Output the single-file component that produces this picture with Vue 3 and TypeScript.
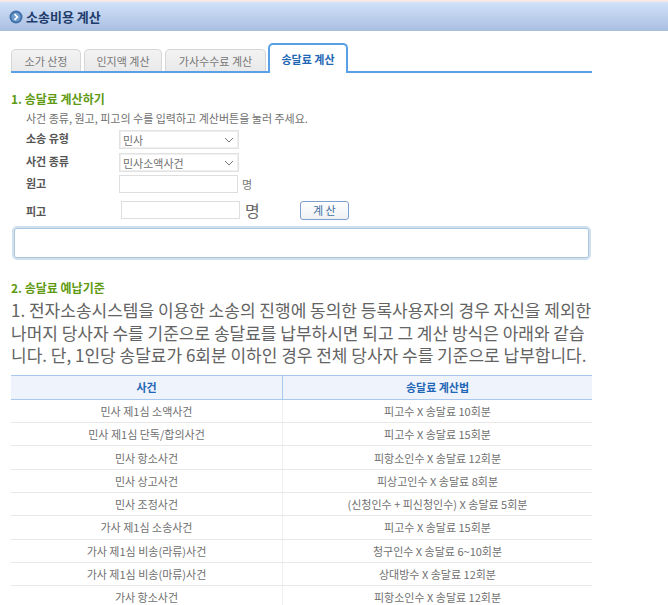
<script setup lang="ts">
const tabs = [
  { label: '소가 산정', w: 70 },
  { label: '인지액 계산', w: 78 },
  { label: '가사수수료 계산', w: 101 },
]
const rows: [string, string][] = [
  ['민사 제1심 소액사건', '피고수 X 송달료 10회분'],
  ['민사 제1심 단독/합의사건', '피고수 X 송달료 15회분'],
  ['민사 항소사건', '피항소인수 X 송달료 12회분'],
  ['민사 상고사건', '피상고인수 X 송달료 8회분'],
  ['민사 조정사건', '(신청인수 + 피신청인수) X 송달료 5회분'],
  ['가사 제1심 소송사건', '피고수 X 송달료 15회분'],
  ['가사 제1심 비송(라류)사건', '청구인수 X 송달료 6~10회분'],
  ['가사 제1심 비송(마류)사건', '상대방수 X 송달료 12회분'],
  ['가사 항소사건', '피항소인수 X 송달료 12회분'],
]
</script>

<template>
  <div class="page">
    <header class="title-bar">
      <svg class="bullet" width="14" height="14" viewBox="0 0 14 14">
        <circle cx="7" cy="7" r="6.5" fill="#3f6fa8" />
        <circle cx="7" cy="7" r="4.6" fill="#6f9ccc" />
        <path d="M5.6 4.2 8.4 7 5.6 9.8" fill="none" stroke="#fff" stroke-width="1.7" />
      </svg>
      <h1>소송비용 계산</h1>
    </header>

    <main class="content">
      <nav class="tabs">
        <a v-for="t in tabs" :key="t.label" class="tab" :style="{ width: t.w + 'px' }">{{ t.label }}</a>
        <a class="tab active">송달료 계산</a>
      </nav>

      <h2 class="heading first">1. 송달료 계산하기</h2>
      <p class="desc">사건 종류, 원고, 피고의 수를 입력하고 계산버튼을 눌러 주세요.</p>

      <div class="form">
        <div class="row r1">
          <label>소송 유형</label>
          <div class="select">
            <span>민사</span>
            <svg width="10" height="6" viewBox="0 0 10 6"><path d="M1 1l4 4 4-4" fill="none" stroke="#777" stroke-width="1" /></svg>
          </div>
        </div>
        <div class="row r2">
          <label>사건 종류</label>
          <div class="select">
            <span>민사소액사건</span>
            <svg width="10" height="6" viewBox="0 0 10 6"><path d="M1 1l4 4 4-4" fill="none" stroke="#777" stroke-width="1" /></svg>
          </div>
        </div>
        <div class="row r3">
          <label>원고</label>
          <input type="text" />
          <span class="unit">명</span>
        </div>
        <div class="row r4">
          <label>피고</label>
          <input type="text" />
          <span class="unit big">명</span>
          <button type="button">계 산</button>
        </div>
      </div>

      <div class="result"></div>

      <h2 class="heading second">2. 송달료 예납기준</h2>
      <p class="lead">1. 전자소송시스템을 이용한 소송의 진행에 동의한 등록사용자의 경우 자신을 제외한 나머지 당사자 수를 기준으로 송달료를 납부하시면 되고 그 계산 방식은 아래와 같습니다. 단, 1인당 송달료가 6회분 이하인 경우 전체 당사자 수를 기준으로 납부합니다.</p>

      <table>
        <thead>
          <tr><th class="c1">사건</th><th>송달료 계산법</th></tr>
        </thead>
        <tbody>
          <tr v-for="r in rows" :key="r[0]">
            <td class="c1">{{ r[0] }}</td>
            <td>{{ r[1] }}</td>
          </tr>
        </tbody>
      </table>
    </main>
  </div>
</template>

<style>
html, body { margin: 0; background: #fff; overflow: hidden; height: 605px; }
</style>

<style scoped>
.page {
  width: 668px;
  height: 605px;
  overflow: hidden;
  font-family: "Noto Sans CJK KR", "Noto Sans", sans-serif;
  font-size: 11px;
  color: #666;
}
.title-bar {
  box-sizing: border-box;
  height: 31px;
  display: flex;
  align-items: center;
  gap: 3px;
  padding: 2px 0 0 9px;
  background: linear-gradient(#fbe9e6 0, #fbe9e6 1px, #cfe0f8 3px, #a9bfe0 100%);
}
.title-bar h1 {
  margin: 0;
  font-size: 13px;
  font-weight: 700;
  color: #1d3c6b;
}
.content {
  width: 581px;
  margin-left: 11px;
}
.tabs {
  box-sizing: border-box;
  height: 42px;
  padding-top: 12px;
  display: flex;
  align-items: flex-end;
  gap: 3px;
  border-bottom: 2px solid #5aa0e6;
}
.tab {
  box-sizing: border-box;
  height: 22px;
  display: flex;
  align-items: center;
  justify-content: center;
  background: linear-gradient(#f3f3f3, #e9e9e9);
  border: 1px solid #d6d6d6;
  border-bottom: 0;
  border-radius: 5px 5px 0 0;
  color: #777;
  font-size: 11px;
}
.tab.active {
  width: 80px;
  height: 30px;
  margin-left: -1px;
  margin-bottom: -2px;
  background: #fff;
  border: 2px solid #5aa0e6;
  border-bottom: 0;
  color: #1f67b5;
  font-weight: 700;
  position: relative;
}
.heading {
  margin: 0;
  font-size: 12px;
  line-height: 16px;
  font-weight: 700;
  color: #5f9a13;
}
.heading.first { margin-top: 18px; }
.heading.second { margin-top: 20px; }
.desc {
  margin: 3px 0 0 15px;
  line-height: 16px;
  font-size: 11px;
  color: #707070;
}
.form { margin-top: 4px; }
.row {
  display: flex;
  align-items: center;
  padding-left: 15px;
}
.row label {
  width: 93px;
  flex: none;
  font-weight: 700;
  font-size: 11px;
  color: #555;
}
.r1 { height: 19px; }
.r2 { height: 19px; margin-top: 4px; }
.r3 { height: 18px; margin-top: 3px; }
.r4 { height: 20px; margin-top: 7px; }
.r1 label, .r2 label, .r3 label { margin-top: -3px; }
.r4 label { margin-top: 2px; }
.select {
  box-sizing: border-box;
  width: 120px;
  height: 19px;
  display: flex;
  align-items: center;
  justify-content: space-between;
  padding: 0 4px 0 3px;
  background: #fff;
  border: 1px solid #e2e2e2;
  outline: 1px solid #efefef;
  outline-offset: -2px;
  color: #707070;
  font-size: 11px;
}
input {
  box-sizing: border-box;
  width: 119px;
  height: 18px;
  padding: 0;
  background: #fff;
  border: 1px solid #dedede;
  outline: none;
}
.r4 input { margin-left: 2px; }
.unit { margin-left: 4px; font-size: 11px; color: #777; }
.unit.big { margin-left: 5px; font-size: 16px; line-height: 18px; color: #666; }
button {
  box-sizing: border-box;
  width: 49px;
  height: 19px;
  margin-left: 40px;
  padding: 0;
  background: linear-gradient(#fff, #eef0f3);
  border: 1px solid #7d9fce;
  border-radius: 3px;
  font-family: inherit;
  font-size: 11px;
  color: #3f6f9f;
}
.result {
  box-sizing: border-box;
  width: 579px;
  height: 34px;
  margin: 6px 0 0 1px;
  background: #fff;
  border: 2px solid #d0e0ee;
  border-radius: 5px;
  box-shadow: inset 0 0 0 1px #a9c6de;
}
.lead {
  margin: 3px 0 0;
  font-size: 17px;
  line-height: 22.6px;
  color: #636363;
}
table {
  width: 581px;
  margin-top: 8px;
  border-collapse: collapse;
  table-layout: fixed;
}
th {
  height: 23px;
  padding: 0;
  background: #eff4fc;
  border-top: 1px solid #a9c8f0;
  border-bottom: 1px solid #a9c8f0;
  color: #1f67b5;
  font-size: 11px;
  font-weight: 700;
}
th.c1 { border-right: 1px solid #a9c8f0; width: 271px; }
td {
  height: 22.3px;
  padding: 0;
  text-align: center;
  border-bottom: 1px solid #e8e8e8;
  color: #707070;
  font-size: 11px;
}
td.c1 { border-right: 1px solid #eef0f2; }
</style>
